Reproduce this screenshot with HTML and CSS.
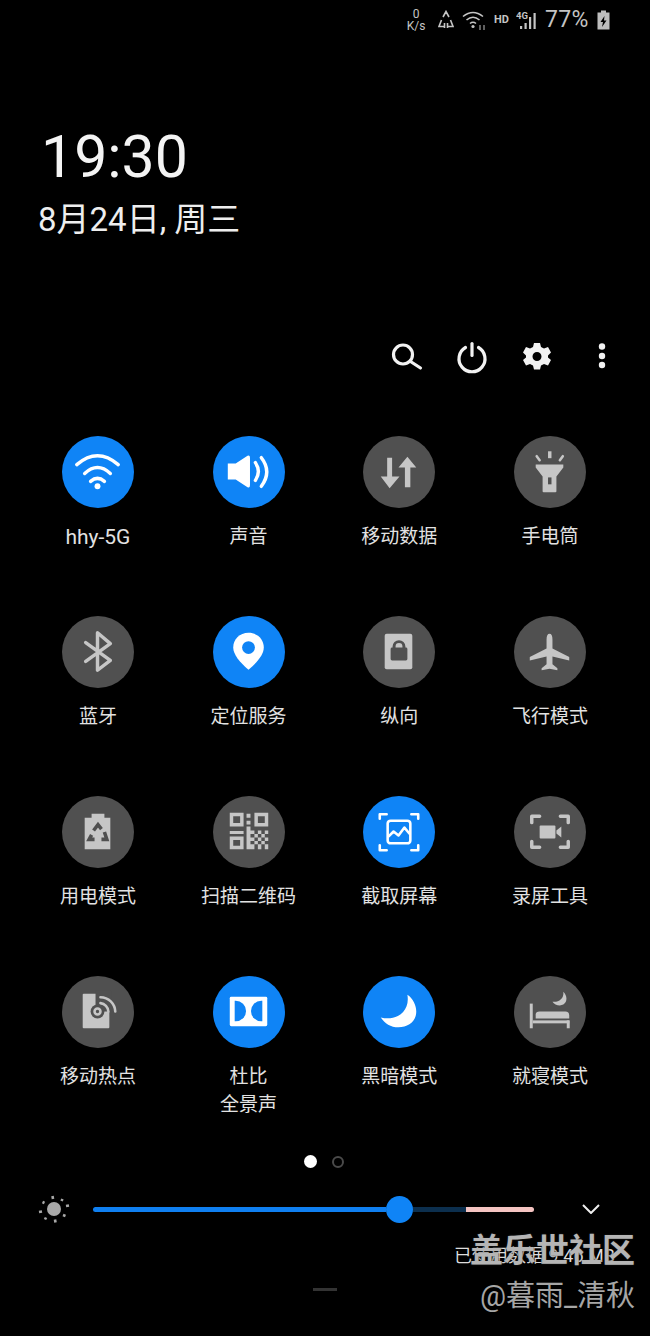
FILE: index.html
```html
<!DOCTYPE html>
<html lang="zh-CN">
<head>
  <meta charset="UTF-8">
  <meta name="viewport" content="width=device-width, initial-scale=1.0">
  <title>快捷面板</title>
  <link rel="stylesheet" href="styles.css">
</head>
<body>
  <div class="panel">
    <!-- status bar -->
    <div class="status">
      <div class="speed"><span>0</span><span>K/s</span></div>
      <svg class="st-recycle" width="16" height="20" viewBox="0 0 16 20"><path d="M5 7 L8 1.500 L11 7 M3.500 10 L1 16.500 H6 M12.500 10 L15 16.500 H10 M6.500 13 V18 M9.500 18 V13" /></svg>
      <svg class="st-wifi" width="25" height="20" viewBox="0 0 25 20"><path d="M1 6.500 Q11 -1.500 21 6.500 M4.500 10 Q11 4.500 17.500 10 M8 13.500 Q11 11 14 13.500" /><circle cx="11" cy="16.500" r="1.600" /><path class="dim" d="M18 15 V20 M22 20 V15" /></svg>
      <span class="hd">HD</span>
      <svg class="st-signal" width="22" height="20" viewBox="0 0 22 20"><text x="0" y="8.500">4G</text><rect x="4" y="16" width="2.200" height="3" /><rect x="8.500" y="13" width="2.200" height="6" /><rect x="13" y="7" width="2.200" height="12" /><rect x="17.500" y="3" width="2.200" height="16" /></svg>
      <span class="batt-num">77%</span>
      <svg class="st-batt" width="13" height="20" viewBox="0 0 13 20"><path d="M4 0.500 H9 V2.500 H12.500 V19.500 H0.500 V2.500 H4 Z" /><path class="bolt" d="M7.500 6 L3.500 12 H6 L5 17 L9.500 10.500 H7 Z" /></svg>
    </div>

    <div class="clock">19:30</div>
    <div class="date">8月24日, 周三</div>

    <div class="toolbar">
      <svg width="40" height="40" viewBox="0 0 40 40"><circle cx="16" cy="18.500" r="9.500" /><path d="M23.500 25.500 L33.500 32" /></svg>
      <svg width="40" height="40" viewBox="0 0 40 40"><path d="M13.500 11.500 A13 13 0 1 0 26.500 11.500" /><path d="M20 7.500 V19.500" /></svg>
      <svg width="40" height="40" viewBox="0 0 40 40"><path class="solid" fill-rule="evenodd" d="M17 7 H23 L24 11 L27 12.500 L31 11 L34 16.500 L31 19.500 V21.500 L34 24 L31 29.500 L27 28 L24 29.500 L23 33.500 H17 L16 29.500 L13 28 L9 29.500 L6 24 L9 21.500 V19.500 L6 16.500 L9 11 L13 12.500 L16 11 Z M20 16 A4.500 4.500 0 1 0 20 25 A4.500 4.500 0 1 0 20 16 Z" /></svg>
      <svg width="40" height="40" viewBox="0 0 40 40"><circle class="solid" cx="20" cy="10.500" r="3.200" /><circle class="solid" cx="20" cy="20" r="3.200" /><circle class="solid" cx="20" cy="29" r="3.200" /></svg>
    </div>

    <div class="grid">
      <div class="tile on">
        <div class="icon"><svg viewBox="0 0 73 73"><path class="line" d="M15 29 Q36 11 57 29" /><path class="line" d="M23 38 Q36 26 49 38" /><path class="line" d="M29 46 Q36 40 43 46" /><circle class="fill" cx="36" cy="51" r="3" /></svg></div>
        <div class="label latin">hhy-5G</div>
      </div>
      <div class="tile on">
        <div class="icon"><svg viewBox="0 0 73 73"><path class="fill" d="M15 28 H23 L35 20 Q37.500 19 37.500 22 V50 Q37.500 53 35 52 L23 44 H15 Z" /><path class="line" d="M43 27 Q49 36 43 45" /><path class="line" d="M49 22 Q60 36 49 51" /></svg></div>
        <div class="label">声音</div>
      </div>
      <div class="tile">
        <div class="icon"><svg viewBox="0 0 73 73"><path class="fill" d="M24.500 22 H29.500 V41 H37 L27 53 L18 41 H24.500 Z" /><path class="fill" d="M45 21 L54 32 H48 V52 H42.500 V32 H36 Z" /></svg></div>
        <div class="label">移动数据</div>
      </div>
      <div class="tile">
        <div class="icon"><svg viewBox="0 0 73 73"><path class="fill" d="M22 29 H50 V32 L43 41 V56 Q43 57 42 57 H30 Q29 57 29 56 V41 L22 32 Z" /><rect class="cut" x="34.500" y="42" width="3.500" height="7" /><rect class="fill" x="34.500" y="15.500" width="3.500" height="7" /><path class="line thin" d="M23 20.500 L26 24.500" /><path class="line thin" d="M49.500 20.500 L46.500 24.500" /></svg></div>
        <div class="label">手电筒</div>
      </div>

      <div class="tile">
        <div class="icon"><svg viewBox="0 0 73 73"><path class="line" d="M24 27 L49 45 L36 55 V17 L49 28 L24 46" /></svg></div>
        <div class="label">蓝牙</div>
      </div>
      <div class="tile on">
        <div class="icon"><svg viewBox="0 0 73 73"><path class="fill" d="M36 17 C45 17 51.500 23.500 51.500 32 C51.500 39 45 47 36 54.500 C27 47 20.500 39 20.500 32 C20.500 23.500 27 17 36 17 Z" /><circle class="cut" cx="36" cy="32" r="6.500" /></svg></div>
        <div class="label">定位服务</div>
      </div>
      <div class="tile">
        <div class="icon"><svg viewBox="0 0 73 73"><rect class="fill" x="22" y="18" width="28" height="36" rx="2" /><rect class="cut" x="28" y="32" width="17" height="13" rx="1.500" /><path class="cutline" d="M31.500 33 V31 A5 5 0 0 1 41.500 31 V33" /></svg></div>
        <div class="label">纵向</div>
      </div>
      <div class="tile">
        <div class="icon"><svg viewBox="0 0 73 73"><path class="fill" d="M36 18 Q39 18 39 24 V33 L56 41.500 V45 L39 41 V49 L44 53 V55 L36 53.500 L28 55 V53 L33 49 V41 L16 45 V41.500 L33 33 V24 Q33 18 36 18 Z" /></svg></div>
        <div class="label">飞行模式</div>
      </div>

      <div class="tile">
        <div class="icon"><svg viewBox="0 0 73 73"><path class="fill" d="M30 18 H43 V22 H49 V54 H23 V22 H30 Z" /><path class="cutline wide" d="M32 35 L36.500 29 L40 33.500 M43 36.500 L45.500 44 H40 M33 44 H27.500 L30 39.500" /></svg></div>
        <div class="label">用电模式</div>
      </div>
      <div class="tile">
        <div class="icon"><svg viewBox="0 0 73 73">
          <path class="fill" fill-rule="evenodd" d="M17 17 H31 V31 H17 Z M20.500 20.500 V27.500 H27.500 V20.500 Z M42 17 H56 V31 H42 Z M45.500 20.500 V27.500 H52.500 V20.500 Z M17 41 H31 V54 H17 Z M20.500 44.500 V50.500 H27.500 V44.500 Z" />
          <path class="fill" d="M34 18 H38 V22 H34 Z M34 25 H38 V29 H34 Z M34 31 H38 V35 H34 Z M17 35.500 H31 V38.500 H17 Z M34 35 H38 V54 H34 Z M38 35 H42 V38.500 H38 Z M42 38.500 H45.500 V42 H42 Z M45.500 35 H49 V38.500 H45.500 Z M49 38.500 H52.500 V42 H49 Z M52.500 35 H56 V38.500 H52.500 Z M38 42 H42 V45.500 H38 Z M45.500 42 H49 V45.500 H45.500 Z M52.500 42 H56 V45.500 H52.500 Z M42 45.500 H45.500 V49 H42 Z M49 45.500 H52.500 V49 H49 Z M38 49 H42 V54 H38 Z M45.500 49 H49 V54 H45.500 Z M52.500 49 H56 V54 H52.500 Z" />
        </svg></div>
        <div class="label">扫描二维码</div>
      </div>
      <div class="tile on">
        <div class="icon"><svg viewBox="0 0 73 73"><path class="line thin" d="M17 23 V18.500 H24 M49 18.500 H56 V23 M17 50 V55 H24 M49 55 H56 V50" /><rect class="line thin" x="25" y="25" width="23" height="23" rx="3" /><path class="line thin" d="M26 41 L31 36 L36 40 L42 32 L47 38" /></svg></div>
        <div class="label">截取屏幕</div>
      </div>
      <div class="tile">
        <div class="icon"><svg viewBox="0 0 73 73"><path class="line" d="M18 27 V20.500 H26 M47 20.500 H55 V27 M18 46 V52 H26 M47 52 H55 V46" /><rect class="fill" x="26" y="30" width="16" height="13" rx="1" /><path class="fill" d="M43 35 L48 31 V42 L43 38 Z" /></svg></div>
        <div class="label">录屏工具</div>
      </div>

      <div class="tile">
        <div class="icon"><svg viewBox="0 0 73 73"><rect class="fill" x="21" y="18" width="27" height="35" rx="1" /><rect class="cut" x="34" y="15" width="16" height="21" /><circle class="cut" cx="36" cy="36" r="7" /><circle class="line thin" cx="36" cy="36" r="3" /><path class="line thin" d="M39 27.500 A9 9 0 0 1 47 36" /><path class="line thin" d="M39 21.500 A15 15 0 0 1 54 36" /></svg></div>
        <div class="label">移动热点</div>
      </div>
      <div class="tile on">
        <div class="icon"><svg viewBox="0 0 73 73"><rect class="fill" x="17" y="21" width="38" height="30" rx="1.500" /><path class="cut" d="M22 25 H23 A10.500 10.500 0 0 1 23 46 H22 Z" /><path class="cut" d="M50 25 H49 A10.500 10.500 0 0 0 49 46 H50 Z" /></svg></div>
        <div class="label">杜比<br>全景声</div>
      </div>
      <div class="tile on">
        <div class="icon"><svg viewBox="0 0 73 73"><path class="fill" d="M45 19 C51 23 54 30 54 36 C54 46 46 52 36 52 C28 52 22 48 18 42 C34 46 48 36 45 19 Z" /></svg></div>
        <div class="label">黑暗模式</div>
      </div>
      <div class="tile">
        <div class="icon"><svg viewBox="0 0 73 73"><rect class="fill" x="16" y="28" width="3" height="25" /><rect class="fill" x="19" y="45" width="37" height="3" /><rect class="fill" x="53.500" y="45" width="3" height="8" /><path class="fill" d="M22 43 V39 Q22 36 26 36 H52 Q56 36 56 40 V43 Z" /><path class="fill" d="M50 16 C54 20 54.500 26 50 29 C46 31 41 29 39 26 C44 27 51 24 50 16 Z" /></svg></div>
        <div class="label">就寝模式</div>
      </div>
    </div>

    <div class="pager"><span class="dot active"></span><span class="dot"></span></div>

    <div class="brightness">
      <svg class="sun" width="32" height="32" viewBox="0 0 32 32"><circle cx="16" cy="16" r="7" /><path d="M14.500 3 L15 6 M24.500 6 L23.500 8 M31 12.500 L28 13 M27.500 23 L25 22 M17.500 29.500 L17 26.500 M7 26.500 L8 24.500 M1 19 L4 18.500 M4.500 9 L6.500 10" /></svg>
      <div class="slider">
        <span class="seg seg-blue"></span>
        <span class="thumb"></span>
        <span class="seg seg-dark"></span>
        <span class="seg seg-pink"></span>
      </div>
      <svg class="chevron" width="18" height="10" viewBox="0 0 18 10"><path d="M1 1 L9 9 L17 1" /></svg>
    </div>

    <div class="usage">已使用数据 9.46 MB</div>
    <div class="handle"></div>

    <div class="watermark">
      <div class="wm-title">盖乐世社区</div>
      <div class="wm-user">@暮雨_清秋</div>
    </div>
  </div>
</body>
</html>
```

FILE: styles.css
```css
* {
  box-sizing: border-box;
}
body {
  margin: 0;
  background-color: #000;
  color: #e4e4e4;
  font-family: Roboto, "Noto Sans CJK SC", sans-serif;
}
.panel {
  position: relative;
  width: 650px;
  height: 1336px;
  overflow: hidden;
}

/* status bar */
.status {
  height: 40px;
  padding: 0 40px 1px 0;
  display: flex;
  justify-content: flex-end;
  align-items: center;
  color: #c4c4c4;
}
.speed {
  width: 20px;
  margin-right: 12px;
  display: flex;
  flex-direction: column;
  align-items: center;
  font-size: 12px;
  line-height: 12px;
}
.status svg {
  fill: none;
  stroke: #c4c4c4;
  stroke-width: 1.6;
}
.st-recycle {
  margin-right: 8px;
}
.st-wifi {
  margin-right: 7px;
}
.st-wifi circle {
  fill: #c4c4c4;
  stroke: none;
}
.st-wifi .dim {
  stroke: #777;
}
.hd {
  width: 16px;
  margin-right: 6px;
  font-size: 11px;
  font-weight: 700;
}
.status .st-signal {
  margin-right: 7px;
  fill: #c4c4c4;
  stroke: none;
}
.st-signal text {
  font-size: 9.5px;
  font-weight: 700;
}
.batt-num {
  width: 47px;
  margin-right: 5px;
  font-size: 23px;
  line-height: 28px;
  letter-spacing: 0.3px;
}
.status .st-batt {
  fill: #bdbdbd;
  stroke: none;
}
.st-batt .bolt {
  fill: #000;
}

/* clock */
.clock {
  margin-top: 82px;
  padding-left: 41px;
  font-size: 59px;
  line-height: 70px;
  color: #f4f4f4;
}
.date {
  margin-top: 8px;
  padding-left: 38px;
  font-size: 33px;
  line-height: 40px;
  color: #eee;
}

/* top icons */
.toolbar {
  margin-top: 96px;
  padding-right: 28px;
  display: flex;
  justify-content: flex-end;
  gap: 25px;
}
.toolbar svg {
  fill: none;
  stroke: #f2f2f2;
  stroke-width: 3.2;
  stroke-linecap: round;
}
.toolbar .solid {
  fill: #f2f2f2;
  stroke: none;
}

/* tiles */
.grid {
  margin-top: 60px;
  padding-left: 22.6px;
  display: grid;
  grid-template-columns: repeat(4, 150.7px);
  grid-template-rows: repeat(3, 180px) auto;
}
.tile {
  --tile: #505050;
  --glyph: #c6c6c6;
  display: flex;
  flex-direction: column;
  align-items: center;
}
.tile.on {
  --tile: #0f84f6;
  --glyph: #fff;
}
.icon {
  width: 72px;
  height: 72px;
  border-radius: 50%;
  background-color: var(--tile);
}
.icon svg {
  display: block;
  width: 72px;
  height: 72px;
}
.icon .fill {
  fill: var(--glyph);
}
.icon .cut {
  fill: var(--tile);
}
.icon .line {
  fill: none;
  stroke: var(--glyph);
  stroke-width: 3.5;
  stroke-linecap: round;
  stroke-linejoin: round;
}
.icon .line.thin {
  stroke-width: 2.6;
}
.icon .cutline {
  fill: none;
  stroke: var(--tile);
  stroke-width: 3;
}
.icon .cutline.wide {
  stroke-width: 3.6;
}
.label {
  margin-top: 15px;
  font-size: 19px;
  line-height: 28px;
  text-align: center;
  white-space: nowrap;
  color: #e2e2e2;
}
.label.latin {
  font-size: 21px;
}

/* page dots */
.pager {
  margin-top: 36px;
  height: 13px;
  padding-left: 304px;
  display: flex;
  align-items: center;
  gap: 15px;
}
.dot {
  width: 12px;
  height: 12px;
  border: 2px solid #4a4a4a;
  border-radius: 50%;
}
.dot.active {
  width: 13px;
  height: 13px;
  border: none;
  background-color: #fff;
}

/* brightness */
.brightness {
  margin-top: 27px;
  height: 28px;
  padding-left: 38px;
  display: flex;
  align-items: center;
}
.sun {
  fill: #a8a8a8;
  stroke: #a8a8a8;
  stroke-width: 2.6;
}
.sun path {
  fill: none;
}
.sun circle {
  stroke: none;
}
.slider {
  margin-left: 23px;
  width: 441px;
  display: flex;
  align-items: center;
}
.seg {
  height: 5px;
}
.seg-blue {
  width: 292.5px;
  background-color: #0f7ff0;
  border-radius: 3px 0 0 3px;
}
.thumb {
  width: 27px;
  height: 27px;
  border-radius: 50%;
  background-color: #0f84f6;
}
.seg-dark {
  width: 53.5px;
  background-color: #0c2f4e;
}
.seg-pink {
  width: 68px;
  background-color: #f5c4c2;
  border-radius: 0 3px 3px 0;
}
.chevron {
  margin-left: 48px;
  fill: none;
  stroke: #eee;
  stroke-width: 2;
}

/* footer */
.usage {
  margin-top: 21px;
  padding-right: 35px;
  font-size: 18px;
  line-height: 24px;
  text-align: right;
  color: #ddd;
}
.handle {
  margin: 20px auto 0;
  width: 24px;
  height: 3px;
  background-color: #333;
}

/* watermark lies over the footer */
.watermark {
  position: absolute;
  right: 15px;
  top: 1230px;
  text-align: right;
}
.wm-title {
  font-size: 33px;
  line-height: 42px;
  font-weight: 700;
  color: #b5b5b5;
  text-shadow: 0 0 2px #222;
}
.wm-user {
  margin-top: 4px;
  font-size: 29px;
  line-height: 40px;
  color: #a6a6a6;
}
```
